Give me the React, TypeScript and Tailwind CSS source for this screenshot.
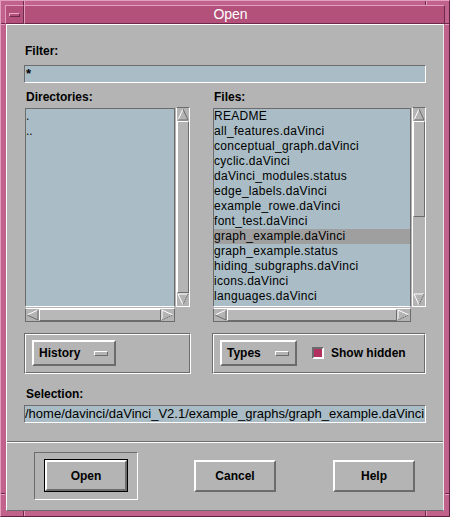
import React from "react";

const files = [
  "README",
  "all_features.daVinci",
  "conceptual_graph.daVinci",
  "cyclic.daVinci",
  "daVinci_modules.status",
  "edge_labels.daVinci",
  "example_rowe.daVinci",
  "font_test.daVinci",
  "graph_example.daVinci",
  "graph_example.status",
  "hiding_subgraphs.daVinci",
  "icons.daVinci",
  "languages.daVinci",
];

function Arrow({ dir }: { dir: "up" | "down" | "left" | "right" }) {
  const L = "#ffffff";
  const D = "#6c6c6c";
  if (dir === "up")
    return (
      <svg width="12" height="13" viewBox="0 0 12 13" className="block">
        <polygon points="6,1 1,12 11,12" fill="#b4b4b4" />
        <line x1="6" y1="1" x2="1" y2="12" stroke={L} />
        <line x1="6" y1="1" x2="11" y2="12" stroke={D} />
        <line x1="1" y1="12" x2="11" y2="12" stroke={D} />
      </svg>
    );
  if (dir === "down")
    return (
      <svg width="12" height="13" viewBox="0 0 12 13" className="block">
        <polygon points="1,1 11,1 6,12" fill="#b4b4b4" />
        <line x1="1" y1="1" x2="11" y2="1" stroke={L} />
        <line x1="1" y1="1" x2="6" y2="12" stroke={L} />
        <line x1="11" y1="1" x2="6" y2="12" stroke={D} strokeDasharray="1.5 1" />
      </svg>
    );
  if (dir === "left")
    return (
      <svg width="13" height="12" viewBox="0 0 13 12" className="block">
        <polygon points="1,6 12,1 12,11" fill="#b4b4b4" />
        <line x1="1" y1="6" x2="12" y2="1" stroke={L} />
        <line x1="1" y1="6" x2="12" y2="11" stroke={D} />
        <line x1="12" y1="1" x2="12" y2="11" stroke={D} />
      </svg>
    );
  return (
    <svg width="13" height="12" viewBox="0 0 13 12" className="block">
      <polygon points="1,1 1,11 12,6" fill="#b4b4b4" />
      <line x1="1" y1="1" x2="1" y2="11" stroke={L} />
      <line x1="1" y1="1" x2="12" y2="6" stroke={L} />
      <line x1="1" y1="11" x2="12" y2="6" stroke={D} strokeDasharray="1.5 1" />
    </svg>
  );
}

function VScroll({ slider }: { slider: number }) {
  return (
    <div className="w-[14px] h-[200px] flex flex-col border border-t-[#6c6c6c] border-l-white border-r-white border-b-white bg-[#b4b4b4]">
      <Arrow dir="up" />
      <div className="flex-1 flex flex-col">
        <div
          className="w-full border border-t-white border-l-white border-r-[#6c6c6c] border-b-[#6c6c6c] bg-[#b4b4b4]"
          style={{ height: slider }}
        />
      </div>
      <Arrow dir="down" />
    </div>
  );
}

function HScroll({ width }: { width: number }) {
  return (
    <div
      className="h-[14px] flex flex-row items-center border border-t-white border-l-[#6c6c6c] border-r-[#6c6c6c] border-b-[#6c6c6c] bg-[#b4b4b4]"
      style={{ width }}
    >
      <Arrow dir="left" />
      <div className="flex-1 h-full border border-t-white border-l-white border-r-[#6c6c6c] border-b-[#6c6c6c] bg-[#b8b8b8]" />
      <Arrow dir="right" />
    </div>
  );
}

function Indicator() {
  return (
    <div className="w-[14px] h-[5px] border border-t-white border-l-white border-r-[#6c6c6c] border-b-[#6c6c6c] bg-[#b4b4b4]" />
  );
}

function Etched({ width, children }: { width: number; children: React.ReactNode }) {
  return (
    <div
      className="h-[41px] border border-t-[#6c6c6c] border-l-[#6c6c6c] border-r-white border-b-white"
      style={{ width }}
    >
      <div className="h-full border border-t-white border-l-white border-r-[#6c6c6c] border-b-[#6c6c6c] pl-[6px] pt-[5px] flex flex-row items-start">
        {children}
      </div>
    </div>
  );
}

const raised =
  "border-2 border-t-white border-l-white border-r-[#6c6c6c] border-b-[#6c6c6c] bg-[#b4b4b4]";

export default function App() {
  return (
    <div className="relative w-[450px] h-[517px] bg-[#c0628c] border border-t-[#e39dbd] border-l-[#e39dbd] border-r-[#5e2240] border-b-[#5e2240] px-[4px] pt-[4px] pb-[5px] flex flex-col font-['Liberation_Sans',Arial,sans-serif] text-black">
      {/* frame notches */}
      <div className="absolute left-[22px] top-0 w-px h-[4px] bg-[#6e2a4a]" />
      <div className="absolute left-[23px] top-0 w-px h-[4px] bg-[#e39dbd]" />
      <div className="absolute left-[424px] top-0 w-px h-[4px] bg-[#6e2a4a]" />
      <div className="absolute left-[425px] top-0 w-px h-[4px] bg-[#e39dbd]" />
      <div className="absolute left-[22px] bottom-0 w-px h-[5px] bg-[#6e2a4a]" />
      <div className="absolute left-[23px] bottom-0 w-px h-[5px] bg-[#e39dbd]" />
      <div className="absolute left-[424px] bottom-0 w-px h-[5px] bg-[#6e2a4a]" />
      <div className="absolute left-[425px] bottom-0 w-px h-[5px] bg-[#e39dbd]" />
      <div className="absolute left-0 top-[22px] w-[4px] h-px bg-[#6e2a4a]" />
      <div className="absolute left-0 top-[23px] w-[4px] h-px bg-[#e39dbd]" />
      <div className="absolute right-0 top-[22px] w-[4px] h-px bg-[#6e2a4a]" />
      <div className="absolute right-0 top-[23px] w-[4px] h-px bg-[#e39dbd]" />
      <div className="absolute left-0 bottom-[22px] w-[4px] h-px bg-[#6e2a4a]" />
      <div className="absolute left-0 bottom-[21px] w-[4px] h-px bg-[#e39dbd]" />
      <div className="absolute right-0 bottom-[22px] w-[4px] h-px bg-[#6e2a4a]" />
      <div className="absolute right-0 bottom-[21px] w-[4px] h-px bg-[#e39dbd]" />

      {/* title bar */}
      <div className="h-[19px] flex flex-row shrink-0">
        <div className="w-[19px] h-full border border-t-[#e39dbd] border-l-[#e39dbd] border-r-[#6e2a4a] border-b-[#6e2a4a] bg-[#b4517b] flex items-center justify-center">
          <div className="w-[11px] h-[4px] border border-t-[#e8aac6] border-l-[#e8aac6] border-r-[#6e2a4a] border-b-[#6e2a4a] bg-[#b4517b]" />
        </div>
        <div className="flex-1 h-full border border-t-[#e39dbd] border-l-[#e39dbd] border-r-[#6e2a4a] border-b-[#6e2a4a] bg-[#b4517b] flex items-center justify-center pr-[8px]">
          <span className="text-[14px] leading-[17px] text-white">Open</span>
        </div>
      </div>

      {/* client */}
      <div className="mx-[1px] flex-1 flex flex-col bg-[#b4b4b4] border border-t-white border-l-white border-r-[#e6e6e6] border-b-[#6c6c6c]">
        <div className="h-[416px] flex flex-col px-[17px] pt-[19px]">
          <div className="h-[14px] leading-[14px] text-[12px] font-bold pl-[1px]">Filter:</div>
          <div className="mt-[7px] h-[18px] bg-[#aabdc6] border border-t-[#6c6c6c] border-l-[#6c6c6c] border-r-white border-b-white pl-[1px] text-[13px] leading-[15px] font-bold">
            *
          </div>

          <div className="mt-[7px] h-[14px] flex flex-row text-[12px] leading-[14px] font-bold">
            <div className="w-[167px] pl-[2px]">Directories:</div>
            <div className="ml-[21px] pl-[2px]">Files:</div>
          </div>

          <div className="mt-[3px] flex flex-row">
            <div className="w-[167px] flex flex-col">
              <div className="flex flex-row">
                <div className="ml-[1px] mt-[1px] w-[150px] h-[199px] bg-[#aabdc6] border border-t-[#6c6c6c] border-l-[#6c6c6c] border-r-[#6c6c6c] border-b-white overflow-hidden text-[12px]">
                  <div className="h-[15px] leading-[15px]">.</div>
                  <div className="h-[15px] leading-[15px]">..</div>
                </div>
                <div className="ml-[1px]">
                  <VScroll slider={172} />
                </div>
              </div>
              <div className="ml-[1px] mt-[1px]">
                <HScroll width={150} />
              </div>
            </div>

            <div className="ml-[21px] w-[214px] flex flex-col">
              <div className="flex flex-row">
                <div className="ml-[1px] mt-[1px] w-[198px] h-[199px] bg-[#aabdc6] border border-t-[#6c6c6c] border-l-[#6c6c6c] border-r-[#6c6c6c] border-b-white overflow-hidden text-[12px] tracking-[0.3px]">
                  {files.map((f) => (
                    <div
                      key={f}
                      className={
                        "h-[15px] leading-[15px] whitespace-nowrap " +
                        (f === "graph_example.daVinci" ? "bg-[#9f9f9f]" : "")
                      }
                    >
                      {f}
                    </div>
                  ))}
                </div>
                <div className="ml-[1px]">
                  <VScroll slider={96} />
                </div>
              </div>
              <div className="ml-[1px] mt-[1px]">
                <HScroll width={198} />
              </div>
            </div>
          </div>

          <div className="mt-[11px] flex flex-row">
            <Etched width={167}>
              <div className={"w-[84px] h-[26px] flex flex-row items-center pl-[5px] pr-[6px] justify-between " + raised}>
                <span className="text-[12px] font-bold leading-[14px]">History</span>
                <Indicator />
              </div>
            </Etched>
            <div className="ml-[21px]">
              <Etched width={214}>
                <div className={"w-[77px] h-[26px] flex flex-row items-center pl-[5px] pr-[6px] justify-between " + raised}>
                  <span className="text-[12px] font-bold leading-[14px]">Types</span>
                  <Indicator />
                </div>
                <div className="ml-[15px] mt-[7px] w-[12px] h-[12px] border-2 border-t-[#6c6c6c] border-l-[#6c6c6c] border-r-white border-b-white bg-[#b03060]" />
                <span className="ml-[7px] mt-[6px] text-[12px] font-bold leading-[14px]">Show hidden</span>
              </Etched>
            </div>
          </div>

          <div className="mt-[13px] h-[14px] leading-[14px] text-[12px] font-bold pl-[2px]">Selection:</div>
          <div className="mt-[4px] h-[18px] bg-[#aabdc6] border border-t-[#6c6c6c] border-l-[#6c6c6c] border-r-white border-b-white overflow-hidden whitespace-nowrap text-[13px] leading-[16px]">
            /home/davinci/daVinci_V2.1/example_graphs/graph_example.daVinci
          </div>
        </div>

        <div className="h-px bg-[#6c6c6c]" />
        <div className="h-px bg-white" />

        <div className="flex-1 flex flex-row items-start">
          <div className="ml-[27px] mt-[9px] w-[104px] h-[48px] border border-t-[#6c6c6c] border-l-[#6c6c6c] border-r-white border-b-white pl-[9px] pt-[6px]">
            <div className="w-[84px] h-[33px] border border-black">
              <div className={"w-full h-full flex items-center justify-center text-[12px] font-bold " + raised}>
                Open
              </div>
            </div>
          </div>
          <div className={"ml-[56px] mt-[17px] w-[82px] h-[32px] flex items-center justify-center text-[12px] font-bold " + raised}>
            Cancel
          </div>
          <div className={"ml-[57px] mt-[17px] w-[82px] h-[32px] flex items-center justify-center text-[12px] font-bold " + raised}>
            Help
          </div>
        </div>
      </div>
    </div>
  );
}
